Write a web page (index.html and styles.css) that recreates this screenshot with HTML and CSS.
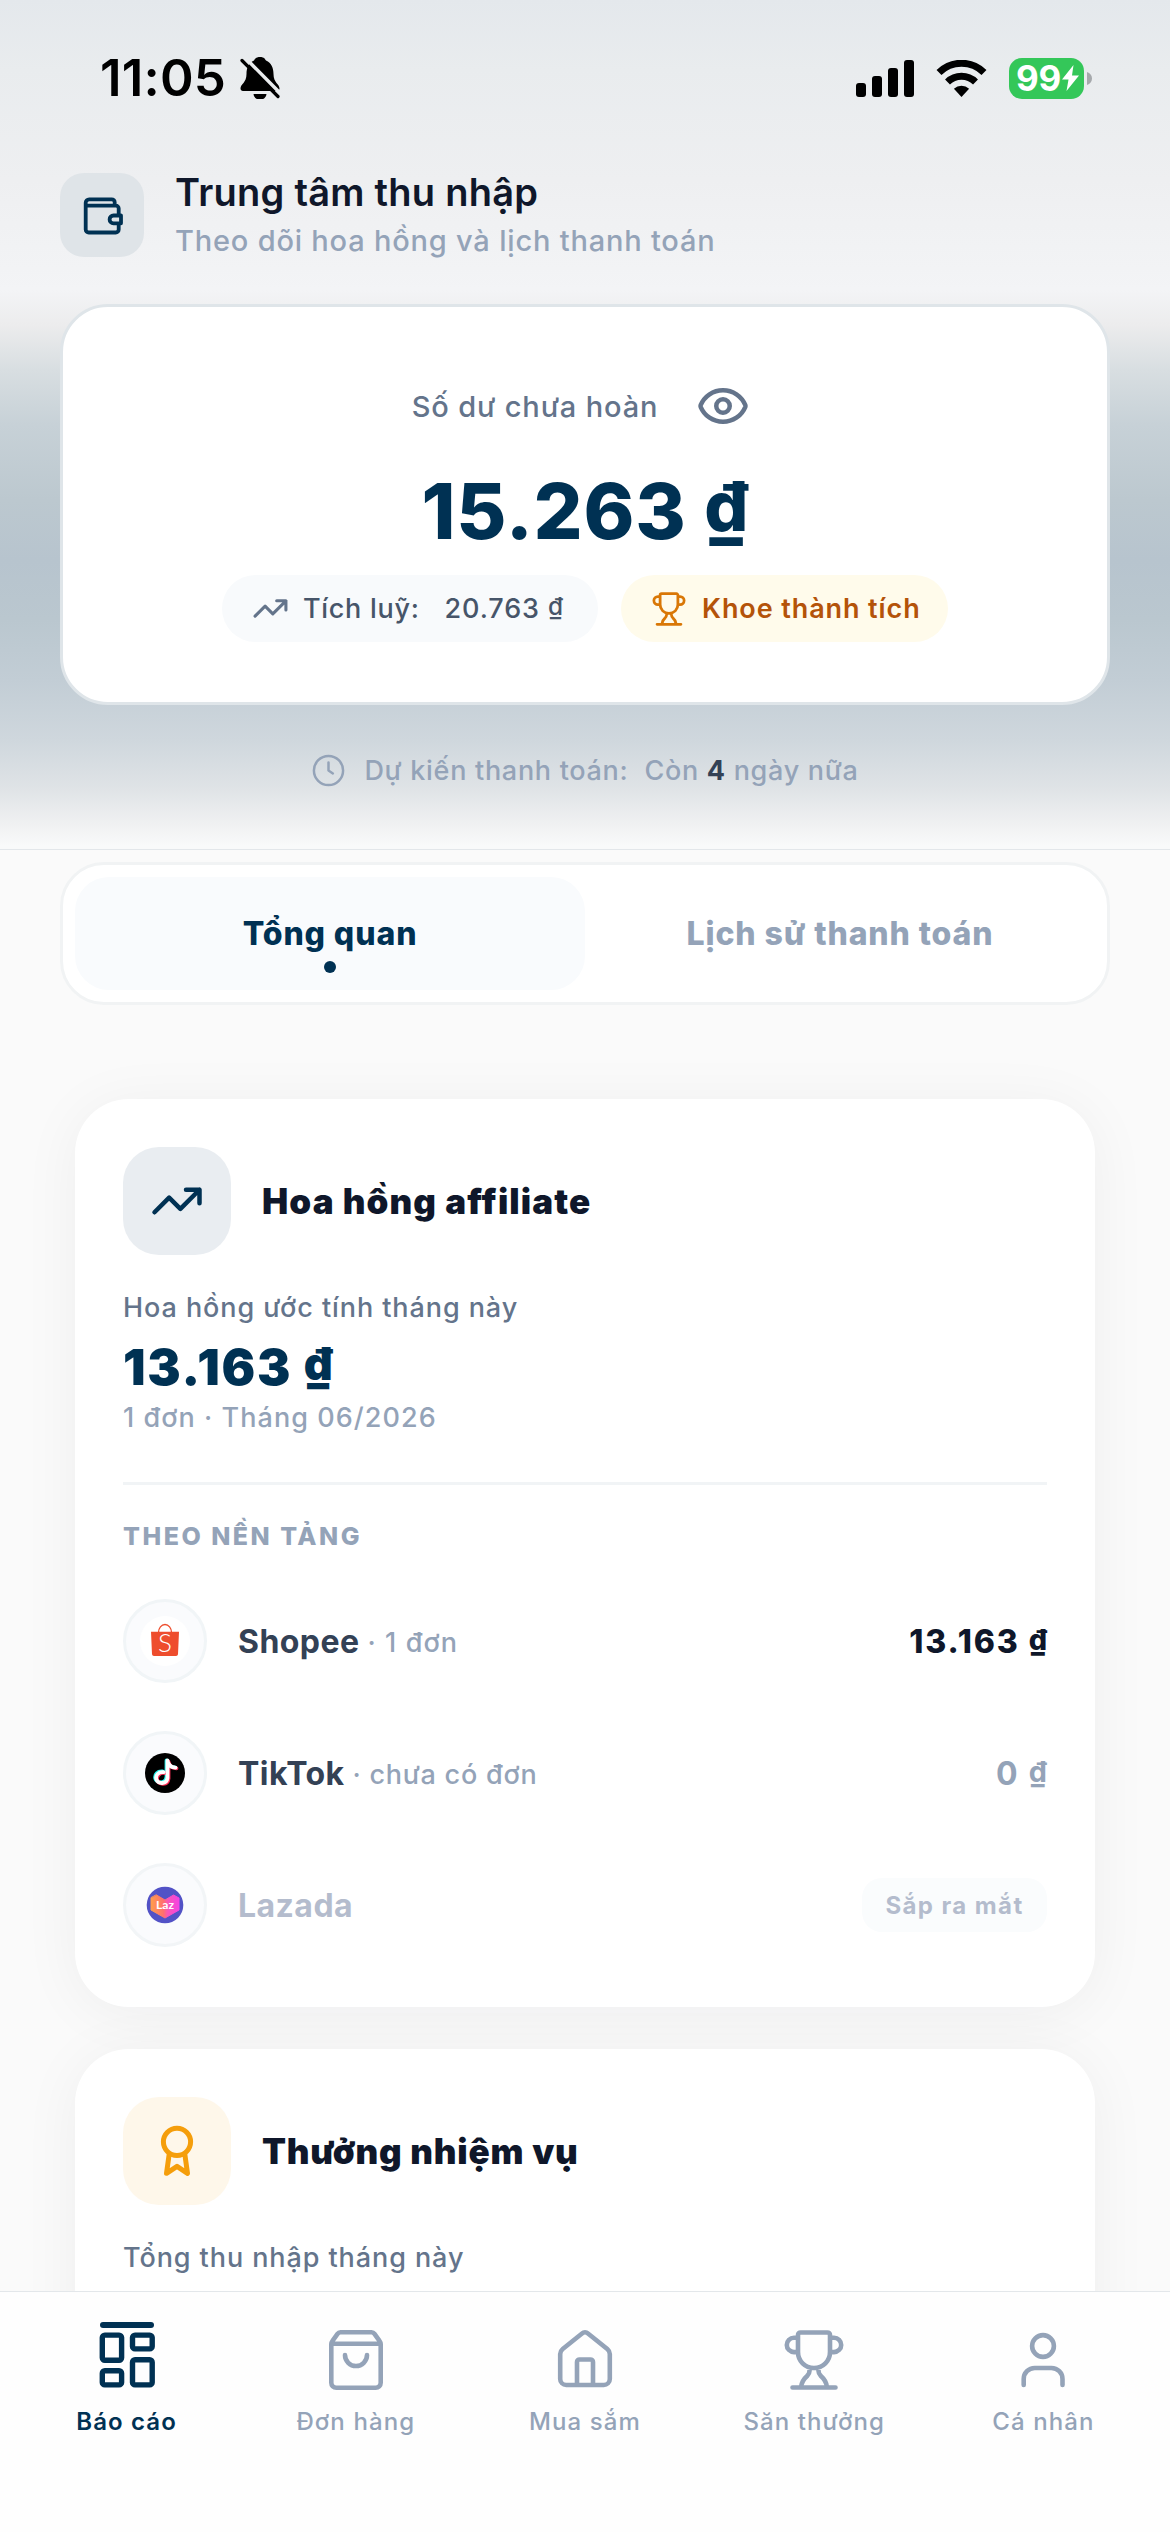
FILE: index.html
```html
<!DOCTYPE html>
<html lang="vi">
<head>
<meta charset="utf-8">
<title>Trung tâm thu nhập</title>
<link rel="stylesheet" href="styles.css">
</head>
<body>
<svg class="defs" width="0" height="0" aria-hidden="true">
  <symbol id="trend" viewBox="0 0 24 24"><path d="M22 7l-8.5 8.5-5-5L2 17M16 7h6v6"/></symbol>
  <symbol id="trophy" viewBox="0 0 72 72"><path d="M22.500 8.500h27a2.500 2.500 0 0 1 2.500 2.500v17c0 9-7 16-16 16s-16-7-16-16V11a2.500 2.500 0 0 1 2.500-2.500zM20 13.700h-4a7.200 7.200 0 0 0 0 14.400h4M52 13.700h4a7.200 7.200 0 0 1 0 14.400h-4M31.500 44v3c0 2-.8 3.400-2.400 5-3.400 3-5.600 6-6 11M40.500 44v3c0 2 .8 3.400 2.400 5 3.400 3 5.600 6 6 11M14.500 63.500h43"/></symbol>
</svg>

<header class="hero">
  <div class="status">
    <div class="status-left">
      <span class="time">11:05</span>
      <svg class="bell" viewBox="0 0 40 42">
        <path d="M20 0a6 6 0 0 0-6 3.500C8.500 6 6.500 11 6.500 17c0 9-6 10-6 14.500 0 1.500 1 2.500 2.500 2.500h34c1.500 0 2.500-1 2.500-2.500 0-4.500-6-5.500-6-14.500 0-6-2-11-7.500-13.500A6 6 0 0 0 20 0zM13.500 37h13a6.500 5.500 0 0 1-13 0z"/>
        <path class="bell-gap" d="M4.500 0L42 38"/>
        <path class="bell-slash" d="M2 3.500L38 39.500"/>
      </svg>
    </div>
    <div class="status-right">
      <svg class="signal" viewBox="0 0 58 37"><rect x="0" y="23" width="10" height="14" rx="3"/><rect x="16" y="16" width="10" height="21" rx="3"/><rect x="32" y="8" width="10" height="29" rx="3"/><rect x="48" y="0" width="10" height="37" rx="3"/></svg>
      <svg class="wifi" viewBox="0 0 51 37"><path class="arc" d="M3 12.500a32 32 0 0 1 45 0M11.500 22a20 20 0 0 1 28 0"/><path d="M25.500 37l-7.600-8.300a11.500 11.500 0 0 1 15.200 0z"/></svg>
      <div class="battery"><span>99</span><svg viewBox="0 0 17 26"><path d="M11.500 0L0 14.500h6.500L4.500 26 17 10.500h-7z"/></svg></div>
      <svg class="cap" viewBox="0 0 5 13"><path d="M0 0c3 1 5 3.500 5 6.500S3 12 0 13z"/></svg>
    </div>
  </div>

  <div class="heading">
    <div class="heading-tile">
      <svg viewBox="0 0 48 48"><path d="M40.700 32.500v6a3 3 0 0 1-3 3h-27a3 3 0 0 1-3-3V11.700a3.400 3.400 0 0 1 3.400-3.400h22.600a3 3 0 0 1 3 3v3.400M7.700 14.700h30.200a2.800 2.800 0 0 1 2.800 2.800V24M43 24.500h-7.500a3.900 3.900 0 0 0 0 7.800H43z"/></svg>
    </div>
    <div>
      <h1 class="heading-title">Trung tâm thu nhập</h1>
      <p class="heading-sub">Theo dõi hoa hồng và lịch thanh toán</p>
    </div>
  </div>

  <section class="balance">
    <div class="balance-label">
      <span>Số dư chưa hoàn</span>
      <svg viewBox="0 0 24 24"><path d="M2.062 12.348a1 1 0 0 1 0-.696 10.750 10.750 0 0 1 19.876 0 1 1 0 0 1 0 .696 10.750 10.750 0 0 1-19.876 0"/><circle cx="12" cy="12" r="3"/></svg>
    </div>
    <div class="balance-amount">15.263 <span class="dong">₫</span></div>
    <div class="pills">
      <div class="pill pill-total"><svg><use href="#trend"/></svg><span class="pill-name">Tích luỹ:</span><span class="pill-value">20.763 <span class="dong">₫</span></span></div>
      <div class="pill pill-share"><svg><use href="#trophy"/></svg><span>Khoe thành tích</span></div>
    </div>
  </section>

  <div class="payout">
    <svg viewBox="0 0 24 24"><circle cx="12" cy="12" r="10"/><path d="M12 6.500V12l3 2"/></svg>
    <span class="payout-name">Dự kiến thanh toán:</span>
    <span class="payout-value">Còn <b>4</b> ngày nữa</span>
  </div>
</header>

<main class="content">
  <div class="tabs">
    <div class="tab tab-active">Tổng quan</div>
    <div class="tab tab-history">Lịch sử thanh toán</div>
  </div>

  <section class="card">
    <div class="card-head">
      <div class="card-tile"><svg><use href="#trend"/></svg></div>
      <h2 class="card-title">Hoa hồng affiliate</h2>
    </div>
    <p class="card-label">Hoa hồng ước tính tháng này</p>
    <div class="card-amount">13.163 <span class="dong">₫</span></div>
    <p class="card-sub">1 đơn · Tháng 06/2026</p>
    <div class="divider"></div>
    <h3 class="group">THEO NỀN TẢNG</h3>
    <div class="rows">
      <div class="row">
        <div class="logo"><svg viewBox="0 0 40 40">
          <circle cx="20" cy="20" r="25" fill="#fff"/>
          <path d="M13.500 11.500a6.500 8 0 0 1 13 0" fill="none" stroke="#ee4d2d" stroke-width="1.300"/>
          <path d="M6 10.700h28l-1 22.500a2 2 0 0 1-2 1.800H9a2 2 0 0 1-2-1.800z" fill="#ee4d2d"/>
          <text class="shopee-s" x="20" y="30.500" text-anchor="middle">S</text>
        </svg></div>
        <div class="name">Shopee</div><div class="orders orders-one">· 1 đơn</div>
        <div class="value value-on">13.163 <span class="dong">₫</span></div>
      </div>
      <div class="row">
        <div class="logo"><svg viewBox="0 0 40 40">
          <circle cx="20" cy="20" r="20"/>
          <g fill="none" stroke-width="3.800">
            <path stroke="#25f4ee" d="M17.500 18.500c-5-.5-8.200 3-7.200 7 1.200 5.300 10.700 5.300 11.200-1.500V7.500c.5 4 3.500 6.500 8 6.800"/>
            <path stroke="#fe2c55" d="M19.500 20c-5-.5-8.200 3-7.200 7 1.200 5.300 10.700 5.300 11.200-1.500V8.500c.5 4 3.500 6.500 8 6.800"/>
            <path stroke="#fff" d="M18.500 19.200c-5-.5-8.200 3-7.200 7 1.200 5.300 10.700 5.300 11.200-1.500V7.500c.5 4.500 3.500 6.800 8 7.100"/>
          </g>
        </svg></div>
        <div class="name">TikTok</div><div class="orders">· chưa có đơn</div>
        <div class="value value-off">0 <span class="dong">₫</span></div>
      </div>
      <div class="row">
        <div class="logo logo-dim"><svg viewBox="0 0 40 40">
          <defs><linearGradient id="laz"><stop offset="0" stop-color="#ff9338"/><stop offset=".45" stop-color="#ff6060"/><stop offset=".6" stop-color="#f944b0"/><stop offset="1" stop-color="#f430e0"/></linearGradient></defs>
          <circle cx="20" cy="20" r="18.300" fill="#4040c0"/>
          <path d="M11.500 10l8.500 5 8.500-5 5.500 3v12L20 33 6 25V13z" fill="url(#laz)" stroke="url(#laz)" stroke-width="1" stroke-linejoin="round"/>
          <text class="laz-text" x="20" y="24" text-anchor="middle">Laz</text>
        </svg></div>
        <div class="name lazada">Lazada</div>
        <div class="soon">Sắp ra mắt</div>
      </div>
    </div>
  </section>

  <section class="card card-next">
    <div class="card-head">
      <div class="card-tile card-tile-gold"><svg class="award" viewBox="0 0 60 60"><circle cx="30" cy="20.800" r="13.600"/><path d="M22.200 33l-2.700 19.300L30 45.300l10.500 7L37.800 33"/></svg></div>
      <h2 class="card-title title-next">Thưởng nhiệm vụ</h2>
    </div>
    <p class="card-label">Tổng thu nhập tháng này</p>
  </section>
</main>

<nav class="nav">
  <div class="nav-item nav-active">
    <svg viewBox="0 0 72 72"><rect x="11.300" y="11.100" width="19.300" height="25.200" rx="2.500"/><rect x="41.500" y="11.100" width="19.700" height="13.800" rx="2.500"/><rect x="11.300" y="46.800" width="19.300" height="14.100" rx="2.500"/><rect x="41.500" y="35.800" width="19.700" height="25.100" rx="2.500"/></svg>
    <span>Báo cáo</span>
  </div>
  <div class="nav-item">
    <svg viewBox="0 0 72 72"><path d="M20.500 8.300h31c1.300 0 2.300.6 3 1.600l5 7c.8 1 1.200 2.100 1.200 3.400v38.500a5 5 0 0 1-5 5H16.300a5 5 0 0 1-5-5V20.300c0-1.300.4-2.400 1.200-3.400l5-7c.7-1 1.700-1.600 3-1.600zM11.300 19.800h49.400M25 31a11 11 0 0 0 22 0"/></svg>
    <span>Đơn hàng</span>
  </div>
  <div class="nav-item">
    <svg viewBox="0 0 72 72"><path d="M11.200 30v25a6 6 0 0 0 6 6h37.600a6 6 0 0 0 6-6V30a7 7 0 0 0-2.500-5L39 9.500a4.500 4.500 0 0 0-6 0L13.700 25a7 7 0 0 0-2.500 5zM28 61V38a2.500 2.500 0 0 1 2.500-2.500h11A2.500 2.500 0 0 1 44 38v23"/></svg>
    <span>Mua sắm</span>
  </div>
  <div class="nav-item">
    <svg><use href="#trophy"/></svg>
    <span>Săn thưởng</span>
  </div>
  <div class="nav-item">
    <svg viewBox="0 0 72 72"><circle cx="36" cy="22" r="10.900"/><path d="M16.700 61v-6a11 11 0 0 1 11-11h16.800a11 11 0 0 1 11 11v6"/></svg>
    <span>Cá nhân</span>
  </div>
</nav>
</body>
</html>
```
FILE: styles.css
```css
* { box-sizing: border-box; margin: 0; padding: 0; }

body {
  width: 1170px;
  height: 2532px;
  overflow: hidden;
  display: flex;
  flex-direction: column;
  background: #fafafa;
  font-family: Inter, "Liberation Sans", sans-serif;
  color: #0f172a;
}

svg { flex: none; display: block; fill: none; stroke: currentColor; stroke-linecap: round; stroke-linejoin: round; stroke-width: 2; }
.defs { position: absolute; }
span, h1, h2, h3, p { white-space: nowrap; }

/* Raised currency sign, underline close to the baseline of the digits */
.dong { font-size: 0.9em; line-height: 0; vertical-align: 0.11em; letter-spacing: 0; }

/* Hero */
.hero {
  flex: none;
  height: 850px;
  padding: 0 60px;
  border-bottom: 1px solid #e3e7ea;
  background: linear-gradient(180deg, #e4e8ec 0, #e9ecee 70px, #eeeff1 180px, #f3f4f6 290px, #ececed 325px, #d8dee1 370px, #c7d1d7 425px, #bcc8cf 500px, #b7c4ce 560px, #bac7cf 620px, #c2cdd5 680px, #cfd7dd 740px, #dfe3e6 788px, #f0f1f2 825px, #f9fafa 846px);
}

.status {
  height: 173px;
  padding: 57px 18px 0 40px;
  display: flex;
  justify-content: space-between;
  align-items: flex-start;
  color: #000;
}
.status-left, .status-right { display: flex; align-items: center; height: 42px; }
.status svg { fill: currentColor; stroke: none; }
.time { font-size: 51px; font-weight: 560; line-height: 42px; letter-spacing: 0.2px; }
.status .bell { width: 40px; height: 42px; margin-left: 14px; }
.status .bell-gap { stroke: #e9ecee; stroke-width: 3.5; }
.status .bell-slash { stroke: #000; stroke-width: 3.2; }
.signal { width: 58px; height: 37px; }
.wifi { width: 51px; height: 37px; margin-left: 22px; }
.status .wifi .arc { fill: none; stroke: #000; stroke-width: 7; stroke-linecap: butt; }
.battery {
  width: 75px;
  height: 41px;
  margin-left: 22px;
  padding-left: 7px;
  border-radius: 13px;
  background: #34c759;
  color: #fff;
  display: flex;
  align-items: center;
  font-size: 35px;
  font-weight: 700;
  letter-spacing: -0.3px;
}
.battery svg { width: 17px; height: 26px; margin-left: 1px; }
.cap { width: 5px; height: 13px; margin-left: 3px; color: #a6a9ac; }

.heading { height: 84px; display: flex; align-items: center; gap: 31px; }
.heading-tile {
  width: 84px;
  height: 84px;
  border-radius: 24px;
  background: #dfe4e8;
  color: #003153;
  display: grid;
  place-items: center;
}
.heading-tile svg { width: 48px; height: 48px; stroke-width: 3.8; }
.heading-title { font-size: 38px; line-height: 48px; font-weight: 570; letter-spacing: 0.25px; }
.heading-sub { margin-top: 4px; font-size: 29px; line-height: 42px; font-weight: 450; letter-spacing: 0.8px; color: #94a3b8; }

.balance {
  margin-top: 47px;
  height: 401px;
  padding-top: 69px;
  border: 3px solid #dfe5e9;
  border-radius: 48px;
  background: #fff;
  display: flex;
  flex-direction: column;
  align-items: center;
}
.balance-label { height: 60px; margin-right: 8px; display: flex; align-items: center; gap: 38px; font-size: 29px; font-weight: 520; letter-spacing: 0.85px; color: #64748b; }
.balance-label svg { width: 54px; height: 54px; }
.balance-amount { margin-top: 27px; font-size: 77px; line-height: 96px; font-weight: 850; letter-spacing: 0.8px; color: #003153; }
.pills { margin-top: 16px; display: flex; gap: 23px; }
.pill { height: 67px; border-radius: 34px; display: flex; align-items: center; font-size: 27px; font-weight: 540; letter-spacing: 0.7px; }
.pill-total { width: 376px; padding-left: 30px; background: #f8fafc; color: #475569; }
.pill-total svg { width: 37px; height: 37px; margin-right: 14px; color: #64748b; }
.pill-value { margin-left: 25px; letter-spacing: 0.9px; }
.pill-share { width: 327px; padding-left: 28px; background: #fffbeb; color: #b45309; font-weight: 570; letter-spacing: 0.9px; }
.pill-share svg { width: 40px; height: 40px; margin-right: 13px; stroke-width: 5; color: #d97706; }

.payout { margin-top: 35px; height: 60px; display: flex; align-items: center; justify-content: center; font-size: 27px; font-weight: 470; letter-spacing: 0.7px; color: #94a3b8; }
.payout svg { width: 35px; height: 35px; margin-right: 18px; stroke-width: 1.7; }
.payout-value { margin-left: 16px; }
.payout b { color: #334155; font-weight: 700; }

/* Tabs */
.content { flex: 1; min-height: 0; overflow: hidden; padding: 12px 60px 0; background: #fafafa; }
.tabs { height: 143px; padding: 12px; border: 3px solid #f1f3f4; border-radius: 44px; background: #fff; display: grid; grid-template-columns: 1fr 1fr; }
.tab { position: relative; display: flex; align-items: center; justify-content: center; border-radius: 34px; font-size: 32px; font-weight: 800; letter-spacing: 0.9px; color: #94a3b8; }
.tab-active { background: #f9fbfd; color: #003153; }
.tab-active::after { content: ""; position: absolute; left: 50%; bottom: 17px; width: 12px; height: 12px; margin-left: -6px; border-radius: 50%; background: #003153; }

/* Cards */
.card { height: 908px; margin: 94px 15px 0; padding: 48px; border-radius: 54px; background: #fff; box-shadow: 0 6px 60px rgba(15, 23, 42, 0.05); }
.card-next { margin-top: 42px; }
.card-head { display: flex; align-items: center; gap: 31px; }
.card-tile { width: 108px; height: 108px; border-radius: 36px; background: #e9edf1; color: #003153; display: grid; place-items: center; }
.card-tile svg { width: 54px; height: 54px; }
.card-tile-gold { background: #fef7ea; color: #f59e0b; }
.card-tile .award { width: 60px; height: 60px; stroke-width: 5; }
.card-title { font-size: 35px; line-height: 42px; font-weight: 880; letter-spacing: 1.1px; }
.title-next { letter-spacing: 0.8px; }
.card-label { margin-top: 32px; font-size: 27px; line-height: 42px; font-weight: 500; letter-spacing: 0.92px; color: #64748b; }
.card-amount { margin-top: 6px; font-size: 50px; line-height: 64px; font-weight: 900; letter-spacing: 1.7px; color: #003153; }
.card-sub { font-size: 27px; line-height: 38px; font-weight: 450; letter-spacing: 1.05px; color: #94a3b8; }
.divider { height: 3px; margin-top: 45px; background: #f1f4f6; }
.group { margin-top: 33px; font-size: 25px; line-height: 36px; font-weight: 800; letter-spacing: 2.5px; color: #94a3b8; }
.rows { margin-top: 45px; display: grid; gap: 48px; }
.row { height: 84px; display: flex; align-items: center; white-space: nowrap; }
.logo { width: 84px; height: 84px; margin-right: 31px; border: 3px solid #f1f5f7; border-radius: 50%; background: #fafbfd; display: grid; place-items: center; }
.logo svg { width: 40px; height: 40px; overflow: visible; fill: #000; stroke: none; }
.logo-dim { opacity: 0.9; }
.shopee-s { font: 300 26px Lato, sans-serif; fill: #fff; }
.laz-text { font: 700 12px Lato, sans-serif; fill: #fff; }
.name { font-size: 32px; font-weight: 660; letter-spacing: 0.45px; color: #334155; }
.orders { margin-left: 8px; padding-top: 2px; font-size: 27px; font-weight: 450; letter-spacing: 0.75px; color: #94a3b8; }
.orders-one { letter-spacing: 1.1px; }
.value { margin-left: auto; font-size: 32px; letter-spacing: 1.9px; }
.value-on { font-weight: 820; }
.value-off { font-weight: 650; color: #94a3b8; }
.lazada { color: #b4bccd; }
.soon { margin-left: auto; width: 185px; height: 54px; border-radius: 20px; background: #fafcfd; display: grid; place-items: center; font-size: 24px; font-weight: 650; letter-spacing: 1.4px; color: #b4bccd; }

/* Bottom navigation */
.nav { flex: none; height: 241px; padding: 32px 12px 0; border-top: 1px solid #e3e7ea; background: #fefefe; display: grid; grid-template-columns: repeat(5, 1fr); }
.nav-item { position: relative; display: flex; flex-direction: column; align-items: center; color: #94a3b8; }
.nav-item svg { width: 72px; height: 72px; stroke-width: 4.6; }
.nav-item span { margin-top: 9px; font-size: 24px; line-height: 34px; font-weight: 450; letter-spacing: 1.1px; }
.nav-active { color: #003153; }
.nav-item.nav-active svg { stroke-width: 5.4; }
.nav-item.nav-active span { font-weight: 560; letter-spacing: 1.1px; }
.nav-active::before { content: ""; position: absolute; top: -2px; left: 50%; width: 54px; height: 6px; margin-left: -27px; border-radius: 3px; background: currentColor; }
```
